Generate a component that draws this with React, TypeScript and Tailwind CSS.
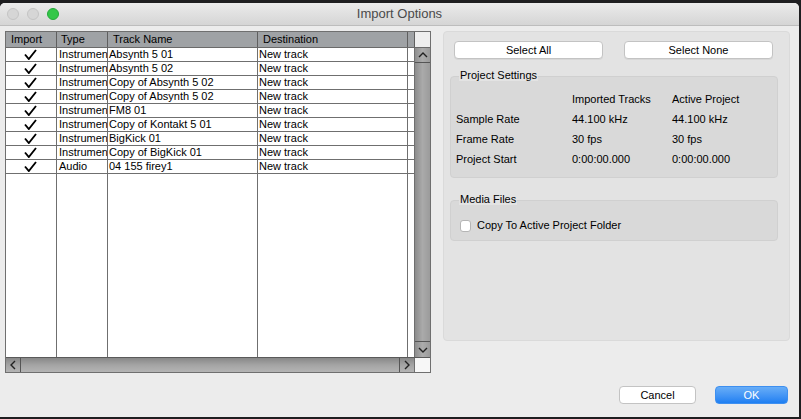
import React from "react";

const tracks: [string, string][] = [
  ["Instrument", "Absynth 5 01"],
  ["Instrument", "Absynth 5 02"],
  ["Instrument", "Copy of Absynth 5 02"],
  ["Instrument", "Copy of Absynth 5 02"],
  ["Instrument", "FM8 01"],
  ["Instrument", "Copy of Kontakt 5 01"],
  ["Instrument", "BigKick 01"],
  ["Instrument", "Copy of BigKick 01"],
  ["Audio", "04 155 firey1"],
];

const settings: [string, string, string][] = [
  ["Sample Rate", "44.100 kHz", "44.100 kHz"],
  ["Frame Rate", "30 fps", "30 fps"],
  ["Project Start", "0:00:00.000", "0:00:00.000"],
];

function Check() {
  return (
    <svg width="13" height="11" viewBox="0 0 13 11" className="block">
      <path d="M1 5.5 L4.8 10 L12 1" fill="none" stroke="#000" strokeWidth="1.9" strokeLinejoin="miter" />
    </svg>
  );
}

function Chevron({ dir }: { dir: "up" | "down" | "left" | "right" }) {
  const d = {
    up: "M1 6 L5 2 L9 6",
    down: "M1 2 L5 6 L9 2",
    left: "M6 1 L2 5 L6 9",
    right: "M2 1 L6 5 L2 9",
  }[dir];
  const vertical = dir === "up" || dir === "down";
  return (
    <svg width={vertical ? 10 : 8} height={vertical ? 8 : 10} viewBox={vertical ? "0 0 10 8" : "0 0 8 10"}>
      <path d={d} fill="none" stroke="#222" strokeWidth="1.4" />
    </svg>
  );
}

function Light({ color }: { color: string }) {
  return <div className={`h-[12px] w-[12px] rounded-full border ${color}`} />;
}

function TrackTable() {
  return (
    <div className="flex h-[342px] w-[426px] flex-col border border-[#6f6f6f] bg-white text-[11px] leading-none text-black">
      <div className="flex flex-1">
        <div className="flex w-[409px] flex-col">
          <div className="flex h-[16px] border-b border-[#6a6a6a] bg-[#9fa2a5]">
            <div className="flex w-[51px] items-center border-r border-[#5f5f5f] pl-[5px]">Import</div>
            <div className="flex w-[51px] items-center border-r border-[#5f5f5f] pl-[4px]">Type</div>
            <div className="flex w-[150px] items-center border-r border-[#5f5f5f] pl-[5px]">Track Name</div>
            <div className="flex w-[150px] items-center border-r border-[#5f5f5f] pl-[5px]">Destination</div>
            <div className="w-[7px] border-r border-[#5f5f5f]" />
          </div>
          {tracks.map(([type, name], i) => (
            <div key={i} className="flex h-[14px] border-b border-[#6f6f6f]">
              <div className="flex w-[51px] items-center justify-center border-r border-[#6f6f6f] pr-[2px]">
                <Check />
              </div>
              <div className="flex w-[51px] items-center overflow-hidden whitespace-nowrap border-r border-[#6f6f6f] pl-[2px]">
                {type}
              </div>
              <div className="flex w-[150px] items-center whitespace-nowrap border-r border-[#6f6f6f] pl-[1px]">{name}</div>
              <div className="flex w-[150px] items-center whitespace-nowrap border-r border-[#6f6f6f] pl-[1px]">New track</div>
              <div className="w-[7px] border-r border-[#6f6f6f]" />
            </div>
          ))}
          <div className="flex flex-1">
            <div className="w-[51px] border-r border-[#6f6f6f]" />
            <div className="w-[51px] border-r border-[#6f6f6f]" />
            <div className="w-[150px] border-r border-[#6f6f6f]" />
            <div className="w-[150px] border-r border-[#6f6f6f]" />
            <div className="w-[7px] border-r border-[#6f6f6f]" />
          </div>
        </div>
        <div className="flex w-[15px] flex-col">
          <div className="h-[16px] border-b border-[#6a6a6a] bg-[#eeeeee]" />
          <div className="flex h-[15px] items-center justify-center border-b border-[#555] bg-gradient-to-r from-[#8e8e8e] via-[#acacac] to-[#9a9a9a]">
            <Chevron dir="up" />
          </div>
          <div className="flex-1 bg-gradient-to-r from-[#8c8c8c] via-[#aaaaaa] to-[#9b9b9b]" />
          <div className="flex h-[16px] items-center justify-center border-t border-[#555] bg-gradient-to-r from-[#8e8e8e] via-[#acacac] to-[#9a9a9a]">
            <Chevron dir="down" />
          </div>
        </div>
      </div>
      <div className="flex h-[15px] border-t border-[#5a5a5a]">
        <div className="flex w-[409px] border-r border-[#6f6f6f] bg-gradient-to-b from-[#888888] via-[#a4a4a4] to-[#b4b4b4]">
          <div className="flex w-[15px] items-center justify-center border-r border-[#555]">
            <Chevron dir="left" />
          </div>
          <div className="flex-1" />
          <div className="flex w-[15px] items-center justify-center border-l border-[#555]">
            <Chevron dir="right" />
          </div>
        </div>
        <div className="w-[15px] bg-[#f7f7f7]" />
      </div>
    </div>
  );
}

function GroupBox({ label, children, className }: { label: string; children: React.ReactNode; className: string }) {
  return (
    <div className="flex flex-col">
      <div className="relative z-10 ml-[9px] h-[12px] self-start bg-[#e3e3e3] px-[1px] text-[11px] leading-[12px] text-black">{label}</div>
      <div className={`-mt-[5px] rounded-[4px] border border-[#d0d0d0] bg-[#d9d9d9] ${className}`}>{children}</div>
    </div>
  );
}

export default function App() {
  return (
    <div className="h-[419px] w-[801px] bg-[#1e1e20] pt-[3px]" style={{ fontFamily: '"Liberation Sans", Arial, sans-serif' }}>
      <div className="flex h-[414px] w-[799px] flex-col overflow-hidden rounded-t-[5px] bg-[#ececec]">
        <div className="relative flex h-[23px] items-center border-b border-[#bdbdbd] bg-gradient-to-b from-[#ebebeb] to-[#d5d5d5] pl-[7px]">
          <div className="flex gap-[8px]">
            <Light color="border-[#c4c4c4] bg-[#d6d6d6]" />
            <Light color="border-[#c4c4c4] bg-[#d6d6d6]" />
            <Light color="border-[#25a93a] bg-[#33c748]" />
          </div>
          <div className="absolute inset-x-0 top-0 flex h-[22px] items-center justify-center text-[13px] text-[#4a4a4a]">
            Import Options
          </div>
        </div>

        <div className="flex pl-[5px] pt-[5px]">
          <TrackTable />
          <div className="ml-[12px] flex h-[310px] w-[347px] flex-col rounded-[4px] border border-[#dadada] bg-[#e3e3e3] pl-[6px] pr-[11px] pt-[9px] text-[11px] text-black">
            <div className="flex gap-[21px] pl-[4px]">
              <button className="h-[18px] w-[149px] rounded-[4px] border border-[#c3c3c3] bg-white text-[11px] shadow-[0_1px_0_rgba(0,0,0,0.05)]">
                Select All
              </button>
              <button className="h-[18px] w-[149px] rounded-[4px] border border-[#c3c3c3] bg-white text-[11px] shadow-[0_1px_0_rgba(0,0,0,0.05)]">
                Select None
              </button>
            </div>

            <div className="mt-[10px]">
              <GroupBox label="Project Settings" className="h-[102px] pt-[12px]">
                <div className="flex h-[20px] items-center">
                  <div className="w-[121px]" />
                  <div className="w-[100px]">Imported Tracks</div>
                  <div>Active Project</div>
                </div>
                {settings.map(([k, a, b]) => (
                  <div key={k} className="flex h-[20px] items-center pl-[5px]">
                    <div className="w-[116px]">{k}</div>
                    <div className="w-[100px]">{a}</div>
                    <div>{b}</div>
                  </div>
                ))}
              </GroupBox>
            </div>

            <div className="mt-[15px]">
              <GroupBox label="Media Files" className="flex h-[41px] items-center pl-[9px] pt-[10px]">
                <div className="h-[12px] w-[11px] rounded-[3px] border border-[#b5b5b5] bg-white" />
                <span className="ml-[6px]">Copy To Active Project Folder</span>
              </GroupBox>
            </div>
          </div>
        </div>

        <div className="mt-[13px] flex justify-end gap-[19px] pr-[11px] text-[11px]">
          <button className="h-[18px] w-[77px] rounded-[4px] border border-[#c3c3c3] bg-white text-black">Cancel</button>
          <button className="h-[18px] w-[73px] rounded-[4px] border border-[#3d8ff0] bg-gradient-to-b from-[#67adf7] to-[#1d7ff2] text-white">
            OK
          </button>
        </div>
      </div>
    </div>
  );
}
